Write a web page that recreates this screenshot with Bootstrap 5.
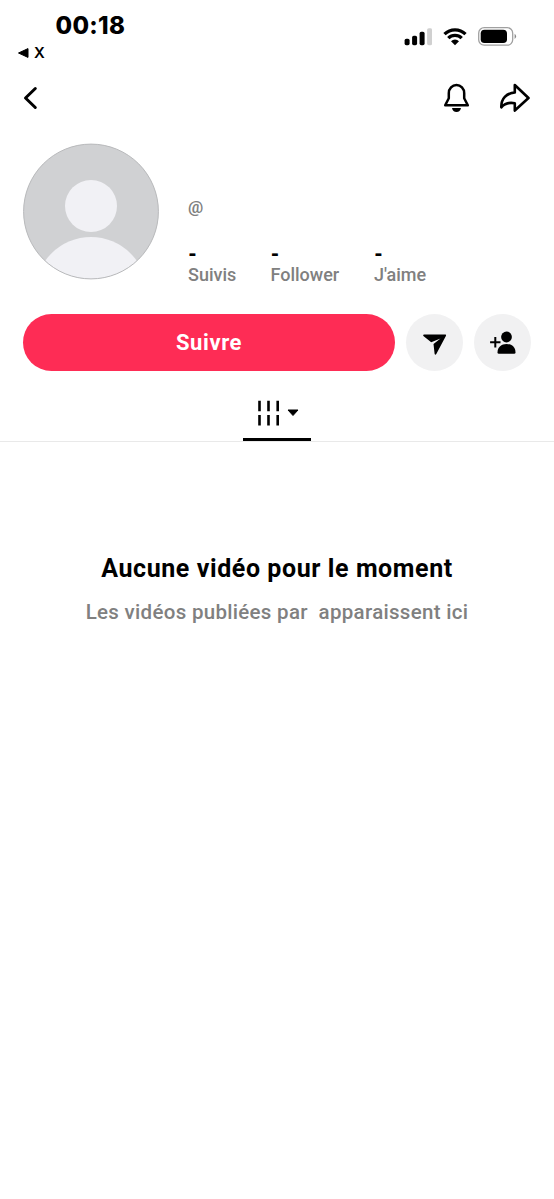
<!DOCTYPE html>
<html lang="fr">
<head>
<meta charset="utf-8">
<meta name="viewport" content="width=device-width, initial-scale=1">
<title>Profil</title>
<link href="https://cdn.jsdelivr.net/npm/bootstrap@5.3.0/dist/css/bootstrap.min.css" rel="stylesheet">
<style>
body{font-family:Roboto,"Noto Sans",sans-serif;color:#000;background:#fff;line-height:1;min-height:1199px}
svg{display:block;flex:none}
.status{height:66px;padding:13px 37px 0 18px;font-family:Inter,sans-serif}
.clock{font-size:24px;line-height:26px;font-weight:800;margin-left:37.5px;letter-spacing:.3px}
.back-app{font-size:15px;line-height:20px;font-weight:600;margin-top:4px;gap:5px}
.signals{gap:11px;padding-top:13px}
.topbar{height:64px;padding:0 24px 0 23px}
.icon-btn{border:0;background:none;padding:0;color:#000}
.profile{padding:13px 23px 0;height:150px;gap:29px}
.muted{color:#808080;font-weight:500}
.handle{font-size:17px;line-height:20px;margin-top:54px;font-weight:600}
.stats{margin-top:26px}
.stat b{display:block;font-size:20px;line-height:22px;height:22px;font-weight:900}
.stat span{display:block;font-size:18px;line-height:20px}
.actions{padding:0 23px;margin-top:34px;gap:11px}
.follow{height:57px;border-radius:29px;background:#fe2c55;color:#fff;font-size:22px;font-weight:700;border:0;letter-spacing:.6px}
.round{width:57px;height:57px;border-radius:50%;background:#f1f1f2;border:0;padding:0}
.tabs{height:71px;border-bottom:1px solid #e9e9e9}
.tab-on{width:68px;border-bottom:3px solid #000;padding:29px 0 13px 1px;gap:6px}
.empty h1{font-size:25px;line-height:30px;font-weight:700;margin:112px 0 0;letter-spacing:.58px}
.empty p{font-size:20.5px;line-height:26px;margin:14.500px 0 0;white-space:pre;letter-spacing:.3px}
</style>
</head>
<body>
<header class="status d-flex justify-content-between">
  <div>
    <div class="clock">00:18</div>
    <div class="back-app d-flex align-items-center"><svg width="11" height="10"><path d="M.5 5 10 .6v8.8Z" stroke="#000" stroke-linejoin="round"/></svg><span>X</span></div>
  </div>
  <div class="signals d-flex">
    <svg width="28" height="20"><g transform="translate(.6 .8)"><rect x="0" y="12" width="5" height="6.500" rx="1.700"/><rect x="7.500" y="9" width="5" height="9.500" rx="1.700"/><rect x="15" y="5" width="5" height="13.500" rx="1.700"/><rect x="22.500" y="1.500" width="5" height="17" rx="1.700" fill="#d0d0d0"/></g></svg>
    <svg width="24" height="20" viewBox="0 0 24 20" fill="none" stroke="#000" stroke-width="3.300"><path d="M1.500 8.100a15 15 0 0 1 21 0M5.300 12.200a9.500 9.500 0 0 1 13.400 0"/><path d="M8 15.200a5.400 5.400 0 0 1 8 0L12 19.200Z" fill="#000" stroke="none"/></svg>
    <svg width="39" height="20"><rect x=".7" y="1.700" width="34" height="17.500" rx="5.500" fill="none" stroke="#a0a0a0" stroke-width="1.300"/><rect x="2.700" y="3.800" width="26.300" height="13.200" rx="3.800"/><path d="M36.600 7.800q3 2.600 0 5.200Z" fill="#888"/></svg>
  </div>
</header>
<nav class="topbar d-flex align-items-center justify-content-between">
  <button class="icon-btn" aria-label="Retour"><svg width="15" height="24" fill="none" stroke="#000" stroke-width="3" stroke-linecap="round" stroke-linejoin="round"><path d="M12.300 2.500 2.500 12l9.800 9.500"/></svg></button>
  <div class="d-flex" style="gap:29px">
    <button class="icon-btn" aria-label="Notifications"><svg width="27" height="30" viewBox="0 0 27 30" fill="none" stroke="#000" stroke-width="2.500" stroke-linejoin="round"><path d="M2.200 22.300 5.800 15.200V10.200a7.700 8.200 0 0 1 15.400 0v5l3.600 7.100Z"/><path d="M9 25h9q-.8 4-4.500 4T9 25Z" fill="#000" stroke="none"/></svg></button>
    <button class="icon-btn" aria-label="Partager"><svg width="31" height="30" viewBox="0 0 31 30" fill="none" stroke="#000" stroke-width="2.600" stroke-linejoin="round"><path d="M15.800 2 29.500 15 15.800 27.500v-7.300C9.500 19.100 5.500 20.500 2.300 24.300 2 16 7.500 10 15.800 9.500Z"/></svg></button>
  </div>
</nav>
<main>
  <section class="profile d-flex">
    <svg width="136" height="137" viewBox="0 0 136 137"><defs><clipPath id="disc"><circle cx="68" cy="68.500" r="67.500"/></clipPath></defs><g clip-path="url(#disc)"><path fill="#d0d1d3" d="M0 0h136v137H0z"/><circle cx="68" cy="63" r="26" fill="#f1f1f5"/><circle cx="68" cy="150" r="56" fill="#f1f1f5"/></g><circle cx="68" cy="68.500" r="67.400" fill="none" stroke="#b9babc"/></svg>
    <div>
      <div class="handle muted">@</div>
      <div class="stats d-flex">
        <div class="stat" style="width:82.500px"><b>-</b><span class="muted">Suivis</span></div>
        <div class="stat" style="width:103.500px"><b>-</b><span class="muted">Follower</span></div>
        <div class="stat"><b>-</b><span class="muted">J'aime</span></div>
      </div>
    </div>
  </section>
  <section class="actions d-flex">
    <button class="follow flex-grow-1">Suivre</button>
    <button class="round d-flex align-items-center justify-content-center" aria-label="Message"><svg width="26" height="26" viewBox="0 0 26 26"><path d="M2 4.500h21.200q1.300 0 .8 1.200L14.300 24q-1.100 1.700-1.700-.2L11.500 14l7-5.500-9.300 3.800L1.400 6Q.5 4.500 2 4.500Z"/></svg></button>
    <button class="round d-flex align-items-center justify-content-center" aria-label="Ajouter"><svg width="27" height="24" viewBox="0 0 27 24"><circle cx="17.500" cy="6" r="5.400"/><path d="M8.500 21.500C8.500 16 12.500 13 17.500 13s9 3 9 8.500q0 1.300-1.300 1.300H9.800q-1.300 0-1.300-1.300Z"/><path d="M6.300 6v10.400M1.100 11.200h10.400" stroke="#000" stroke-width="2"/></svg></button>
  </section>
  <div class="tabs d-flex justify-content-center">
    <div class="tab-on d-flex align-items-center justify-content-center"><svg width="24" height="26" viewBox="0 0 24 26" stroke="#000" stroke-width="2.600"><path d="M2.500 .8v10.500M11.500 .8v10.500M20.700 .8v10.500M2.500 15v10.500M11.500 15v10.500M20.700 15v10.500"/></svg><svg width="12" height="8"><path d="M1 1h10L6 6.500Z" stroke="#000" stroke-linejoin="round"/></svg></div>
  </div>
  <section class="empty text-center">
    <h1>Aucune vidéo pour le moment</h1>
    <p class="muted">Les vidéos publiées par  apparaissent ici</p>
  </section>
</main>
<script src="https://cdn.jsdelivr.net/npm/bootstrap@5.3.0/dist/js/bootstrap.bundle.min.js"></script>
</body>
</html>
